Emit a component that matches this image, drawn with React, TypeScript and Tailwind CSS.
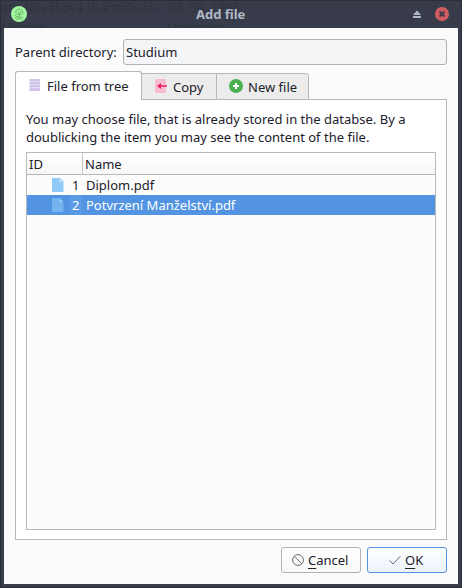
import type { ReactNode } from 'react';

function TreeLogo() {
  return (
    <svg width="16" height="16" viewBox="0 0 16 16" fill="none">
      <circle cx="8" cy="8" r="8" fill="#a3f5a0" />
      <g stroke="#62ad5c" strokeWidth="0.900">
        <path d="M5.500 7.800C3.800 7 4.300 5 5.700 4.700 5.900 2.800 9.300 2.500 10.200 4.200 12.200 4.400 12.400 7 11 7.800 9.800 8.800 8.800 8.200 8.200 8.200 7.200 8.800 6.300 8.500 5.500 7.800Z" />
        <path d="M6.800 5.800l1.700 1.400 1.700-1.400M8.400 7v4M3.500 9.500c1.200-.3 2 .6 2.600 1.600M3.500 12.200c1.500-1.500 3-1.600 4.800-1.200 1.500-.3 3 .2 4.200 1.400M5 13.500c2-1.300 4.300-1.300 6 0" />
      </g>
    </svg>
  );
}

function ListIcon() {
  return (
    <svg width="12" height="12" viewBox="0 0 12 12" shapeRendering="crispEdges">
      <path fill="#d1c4e9" d="M1 0h10v12H1z" />
      <path fill="#e3daf2" d="M0 0h1v2H0zM0 3h1v2H0zM0 6h1v2H0zM0 9h1v3H0zM1 2h10v1H1zM1 5h10v1H1zM1 8h10v1H1z" />
    </svg>
  );
}

function CopyIcon() {
  return (
    <svg width="13" height="14" viewBox="0 0 13 14">
      <rect width="11" height="14" rx="1" fill="#f8bbd0" />
      <path fill="#e91e63" d="M2 7 6 3.900V6.300h6v1.400H6v2.400z" />
    </svg>
  );
}

function PlusIcon() {
  return (
    <svg width="14" height="14" viewBox="0 0 14 14">
      <circle cx="7" cy="7" r="7" fill="#4caf50" />
      <path fill="#fff" d="M6 4h2v2h2v2H8v2H6V8H4V6h2z" />
    </svg>
  );
}

function FileIcon({ selected }: { selected: boolean }) {
  return (
    <svg width="12" height="14" viewBox="0 0 12 14">
      <path fill={selected ? '#75b2f0' : '#90caf9'} d="M0 0h8l3.500 3.500V14H0z" />
      <path fill={selected ? '#a9cdf4' : '#d3ebfd'} d="M7.500 1v3h3z" />
    </svg>
  );
}

function Row({ id, name, selected = false }: { id: number; name: string; selected?: boolean }) {
  return (
    <div className={`flex h-5 items-center ${selected ? 'bg-[#5294e2] text-white' : ''}`}>
      <div className="flex h-5 w-[56px] items-center pl-[25px]">
        <FileIcon selected={selected} />
        <span className={`ml-1.5 h-5 w-[12px] pl-[2px] leading-5 ${selected ? 'bg-[#5b9ae4]' : ''}`}>{id}</span>
      </div>
      <span className="pl-[3px]">{name}</span>
    </div>
  );
}

function Tab({ icon, children, className }: { icon: ReactNode; children: ReactNode; className: string }) {
  return (
    <div className={`flex items-center border border-[#b8b8b8] ${className}`}>
      {icon}
      {children}
    </div>
  );
}

export default function App() {
  return (
    <div className="flex h-[588px] w-[462px] flex-col overflow-hidden border border-[#2b2e39] bg-[#383c4a] text-[13px] leading-[18px] text-[#1c202b] [font-family:'Noto_Sans',sans-serif]">
      <header className="relative flex h-[27px] shrink-0 items-center overflow-hidden pb-[2px]">
        <div aria-hidden="true" className="absolute left-0 top-[-3px] whitespace-pre text-[#2f333f]">
          <div>eta Nováková (Bartoňová)</div>
          <div className="mt-[2px]">Mrázek</div>
          <div className="absolute left-[166px] top-0">07. 04. 1998</div>
          <div className="absolute left-[166px] top-[20px]">Unknown</div>
        </div>
        <div className="relative ml-[10px]"><TreeLogo /></div>
        <div className="relative w-[382px] pl-[169px] text-[13px] font-bold text-[#afb8c6]">Add file</div>
        <svg className="relative" width="48" height="16" viewBox="0 0 48 16">
          <path fill="#afb8c6" d="M8 4.500 12 9H4zM4 10h8v2H4z" />
          <circle cx="33" cy="8" r="7" fill="#d35d63" />
          <path d="m30.500 5.500 5 5m0-5-5 5" stroke="#383c4a" strokeWidth="1.900" />
        </svg>
      </header>

      <main className="mx-[3px] flex h-[556px] flex-col bg-[#fbfbfb] px-[11px] pt-[11px]">
        <div className="flex h-[26px] items-center">
          <label className="w-[108px]">Parent directory:</label>
          <div className="flex h-[26px] flex-1 items-center rounded-[3px] border border-[#b3b3b3] bg-[#f4f5f7] pl-[2px]">Studium</div>
        </div>

        <nav className="relative z-10 mt-1.5 flex h-[29px] items-end">
          <Tab icon={<span className="mb-[2px] mr-1.5"><ListIcon /></span>} className="relative z-10 h-[29px] w-[127px] rounded-t-[3px] border-b-0 bg-white pb-px pl-[13px]">File from tree</Tab>
          <Tab icon={<span className="mb-[2px] mr-[5px]"><CopyIcon /></span>} className="-ml-px h-[27px] w-[76px] bg-[#ececec] pl-[13px]">Copy</Tab>
          <Tab icon={<span className="mb-[2px] mr-[5px]"><PlusIcon /></span>} className="-ml-px h-[27px] w-[93px] rounded-tr-[3px] bg-[#ececec] pl-[12px]">New file</Tab>
        </nav>

        <section className="-mt-px h-[441px] border border-[#b8b8b8] bg-white px-[10px] pt-[10px]">
          <p className="whitespace-nowrap">
            You may choose file, that is already stored in the databse. By a<br />
            doublicking the item you may see the content of the file.
          </p>
          <div className="mt-[6px] h-[378px] border border-[#b8b8b8] bg-[#fcfcfc]">
            <div className="flex h-[22px] border-b border-[#b8b8b8] bg-linear-to-b from-white to-[#f6f6f6] leading-[23px]">
              <span className="w-[56px] border-r border-[#c8c8c8] pl-[2px]">ID</span>
              <span className="pl-[2px]">Name</span>
            </div>
            <Row id={1} name="Diplom.pdf" />
            <Row id={2} name="Potvrzení Manželství.pdf" selected />
          </div>
        </section>

        <footer className="mt-[7px] flex justify-end gap-1.5">
          <button className="flex h-[26px] w-[80px] items-center rounded-[3px] border border-[#b3b3b3] bg-linear-to-b from-white to-[#f8f8f8] pl-[10px]">
            <svg className="mr-1" width="12" height="12" viewBox="0 0 12 12" fill="none" stroke="#686b73">
              <circle cx="6" cy="6" r="5.400" /><path d="m2.200 2.200 7.600 7.600" />
            </svg>
            <span><span className="underline decoration-1 underline-offset-[3px]">C</span>ancel</span>
          </button>
          <button className="flex h-[26px] w-[80px] items-center rounded-[3px] border border-[#5294e2] bg-linear-to-b from-white to-[#edf3fb] pl-[21px]">
            <svg className="mr-1" width="12" height="10" viewBox="0 0 12 10" fill="none" stroke="#686b73"><path d="m.500 5.500 3.500 3.500L11.500 1" /></svg>
            <span><span className="underline decoration-1 underline-offset-[3px]">O</span>K</span>
          </button>
        </footer>
      </main>
    </div>
  );
}
